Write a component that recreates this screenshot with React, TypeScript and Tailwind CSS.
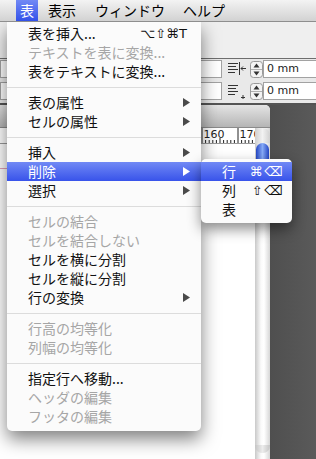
import React from "react";

type Entry =
  | { sep: true }
  | {
      sep?: false;
      label: string;
      disabled?: boolean;
      sub?: boolean;
      shortcut?: string;
      active?: boolean;
    };

const MAIN: Entry[] = [
  { label: "表を挿入...", shortcut: "⌥⇧⌘T" },
  { label: "テキストを表に変換...", disabled: true },
  { label: "表をテキストに変換..." },
  { sep: true },
  { label: "表の属性", sub: true },
  { label: "セルの属性", sub: true },
  { sep: true },
  { label: "挿入", sub: true },
  { label: "削除", sub: true, active: true },
  { label: "選択", sub: true },
  { sep: true },
  { label: "セルの結合", disabled: true },
  { label: "セルを結合しない", disabled: true },
  { label: "セルを横に分割" },
  { label: "セルを縦に分割" },
  { label: "行の変換", sub: true },
  { sep: true },
  { label: "行高の均等化", disabled: true },
  { label: "列幅の均等化", disabled: true },
  { sep: true },
  { label: "指定行へ移動..." },
  { label: "ヘッダの編集", disabled: true },
  { label: "フッタの編集", disabled: true },
];

const SUB = [
  { label: "行", shortcut: "⌘⌫", active: true },
  { label: "列", shortcut: "⇧⌫" },
  { label: "表" },
];

function Arrow({ white }: { white?: boolean }) {
  return (
    <svg width="7" height="9" viewBox="0 0 7 9" className="shrink-0">
      <polygon points="0,0 7,4.5 0,9" fill={white ? "#ffffff" : "#4a4a4a"} />
    </svg>
  );
}

function MenuRow({ entry }: { entry: Entry }) {
  if (entry.sep) {
    return (
      <div className="flex h-[12px] items-center">
        <div className="h-px w-full bg-[#dcdcdc]" />
      </div>
    );
  }
  const color = entry.active
    ? "text-white bg-[linear-gradient(#7189f5,#3853ea)]"
    : entry.disabled
      ? "text-[#a6a6a6]"
      : "text-[#111111]";
  return (
    <div className={`flex h-[19px] items-center pl-[21px] pr-[11px] text-[14px] leading-[19px] ${color}`}>
      <span className="flex-1 whitespace-nowrap">{entry.label}</span>
      {entry.shortcut && (
        <span className="mr-[3px] font-['DejaVu_Sans',sans-serif] text-[13px]">{entry.shortcut}</span>
      )}
      {entry.sub && <Arrow white={entry.active} />}
    </div>
  );
}

function Stepper() {
  return (
    <svg width="13" height="17" viewBox="0 0 13 17" className="shrink-0">
      <rect x="0.5" y="0.5" width="12" height="16" rx="3" fill="#f4f4f4" stroke="#9a9a9a" />
      <line x1="1" y1="8.5" x2="12" y2="8.5" stroke="#b0b0b0" />
      <polygon points="3.5,6.5 9.5,6.5 6.5,2.5" fill="#333" />
      <polygon points="3.5,10.5 9.5,10.5 6.5,14.5" fill="#333" />
    </svg>
  );
}

function IndentIcon({ after }: { after?: boolean }) {
  return (
    <svg width="19" height="16" viewBox="0 0 19 16" className="shrink-0">
      <g stroke="#333" strokeWidth="1">
        <line x1="0" y1="2.5" x2="10" y2="2.5" />
        <line x1="0" y1="5.5" x2="8" y2="5.5" />
        <line x1="0" y1="8.5" x2="10" y2="8.5" />
        <line x1="0" y1="11.5" x2="7" y2="11.5" />
        {after ? (
          <>
            <line x1="13" y1="14.5" x2="17" y2="14.5" />
            <line x1="15" y1="12" x2="15" y2="16" />
          </>
        ) : (
          <>
            <line x1="11.5" y1="1" x2="11.5" y2="14" />
            <line x1="13" y1="7.5" x2="18" y2="7.5" />
            <polyline points="15,5.5 13,7.5 15,9.5" fill="none" />
          </>
        )}
      </g>
    </svg>
  );
}

function ControlRow({ after }: { after?: boolean }) {
  return (
    <div className="flex h-[18px] items-center">
      <div className="h-[18px] flex-1 border border-[#a2a2a2] bg-white" />
      <div className="ml-[6px]">
        <IndentIcon after={after} />
      </div>
      <div className="ml-[3px]">
        <Stepper />
      </div>
      <div className="mr-[-3px] flex h-[18px] w-[56px] shrink-0 items-center border border-[#a2a2a2] bg-white pl-[3px] font-['DejaVu_Sans',sans-serif] text-[11px] text-[#222]">
        0 mm
      </div>
    </div>
  );
}

function Ruler() {
  const ticks: React.ReactNode[] = [];
  for (let n = 110; n <= 175; n++) {
    const x = 202 + 3.6 * (n - 160);
    const h = n % 10 === 0 ? 15 : n % 5 === 0 ? 5 : 3;
    ticks.push(<line key={n} x1={x} y1={15 - h} x2={x} y2={15} stroke="#222" strokeWidth="1" />);
    if (n === 160 || n === 170) {
      ticks.push(
        <text key={`t${n}`} x={x + 1.5} y={10} fontSize="11" fontFamily="DejaVu Sans, sans-serif" fill="#222">
          {n}
        </text>,
      );
    }
  }
  return (
    <svg width="255" height="15" viewBox="0 0 255 15" className="block shrink-0 bg-white">
      {ticks}
    </svg>
  );
}

export default function App() {
  return (
    <div className="relative flex h-[459px] w-[316px] flex-col overflow-hidden bg-[#545454] font-['Noto_Sans_CJK_JP','Noto_Sans',sans-serif]">
      {/* menu bar */}
      <div className="relative z-30 flex h-[22px] shrink-0 items-stretch border-b border-[#8e8e8e] bg-[linear-gradient(#f3f3f3,#d2d2d2)] text-[14px] leading-[21px] text-black">
        <span className="ml-[16px] bg-[linear-gradient(#7189f5,#3351e9)] px-[4px] text-white">表</span>
        <span className="ml-[10px]">表示</span>
        <span className="ml-[19px]">ウィンドウ</span>
        <span className="ml-[18px]">ヘルプ</span>
      </div>

      {/* toolbar */}
      <div className="h-[37px] shrink-0 border-b border-[#6e6e6e] bg-[#efefef]" />
      <div className="flex h-[44px] shrink-0 flex-col gap-[4px] overflow-hidden bg-[#e9e9e9] pt-[1px]">
        <ControlRow />
        <ControlRow after />
      </div>

      {/* workspace */}
      <div className="flex flex-1 pt-[2px]">
        <div className="flex w-[270px] flex-col overflow-hidden rounded-tr-[5px] bg-white">
          <div className="h-[23px] shrink-0 border-b border-[#8a8a8a] bg-[linear-gradient(#e4e4e4,#b5b5b5)]" />
          <div className="flex flex-1">
            <div className="flex flex-1 flex-col">
              <Ruler />
              <div className="flex-1 border-t border-[#9a9a9a] bg-white pt-[24px]">
                <div className="h-px w-full bg-[#e0a0b8]" />
              </div>
            </div>
            <div className="flex w-[15px] flex-col bg-[linear-gradient(90deg,#c9c9c9,#fafafa_40%,#ffffff_60%,#d6d6d6)]">
              <div className="h-[15px] rounded-t-[7px] bg-[linear-gradient(90deg,#cfcfcf,#f2f2f2_50%,#d0d0d0)]" />
              <div className="mx-[1px] h-[32px] rounded-[7px] bg-[linear-gradient(90deg,#2446c4,#86aaf6_50%,#2446c4)]" />
              <div className="flex-1" />
              <div className="mb-[6px] h-[8px] rounded-b-[7px] bg-[linear-gradient(90deg,#c4c4c4,#ececec_50%,#c4c4c4)]" />
            </div>
          </div>
        </div>
        <div className="flex-1 bg-[linear-gradient(90deg,#4f4f4f,#5a5a5a)]" />
      </div>

      {/* main dropdown */}
      <div className="absolute left-[7px] top-[22px] z-20 w-[194px] rounded-b-[5px] bg-[#fbfbfb] pb-[5px] pt-[2px] shadow-[0_8px_18px_rgba(0,0,0,0.5)]">
        {MAIN.map((e, i) => (
          <MenuRow key={i} entry={e} />
        ))}
      </div>

      {/* submenu */}
      <div className="absolute left-[201px] top-[159px] z-20 w-[91px] rounded-[5px] bg-[#fbfbfb] pb-[4px] pt-[3px] shadow-[0_6px_14px_rgba(0,0,0,0.45)]">
        {SUB.map((s) => (
          <div
            key={s.label}
            className={`flex h-[19px] items-center pl-[21px] pr-[7px] text-[14px] leading-[19px] ${
              s.active ? "bg-[linear-gradient(#7189f5,#3853ea)] text-white" : "text-[#111111]"
            }`}
          >
            <span className="flex-1">{s.label}</span>
            {s.shortcut && (
              <span className="font-['DejaVu_Sans',sans-serif] text-[13px] tracking-[2px]">{s.shortcut}</span>
            )}
          </div>
        ))}
      </div>
    </div>
  );
}
